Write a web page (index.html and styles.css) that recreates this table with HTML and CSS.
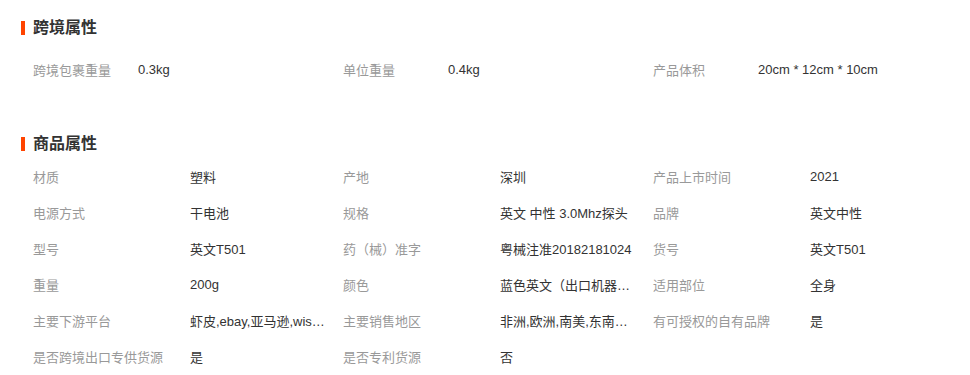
FILE: index.html
```html
<!DOCTYPE html>
<html lang="zh-CN">
<head>
<meta charset="utf-8">
<title>属性</title>
<link rel="stylesheet" href="styles.css">
</head>
<body>
<div class="page">
  <section class="section">
    <h2 class="section-title"><span class="title-bar"></span>跨境属性</h2>
    <div class="attrs attrs-cross">
      <div class="attr"><span class="attr-label">跨境包裹重量</span><span class="attr-value">0.3kg</span></div>
      <div class="attr"><span class="attr-label">单位重量</span><span class="attr-value">0.4kg</span></div>
      <div class="attr"><span class="attr-label">产品体积</span><span class="attr-value">20cm * 12cm * 10cm</span></div>
    </div>
  </section>
  <section class="section section-goods">
    <h2 class="section-title"><span class="title-bar"></span>商品属性</h2>
    <div class="attrs attrs-goods">
      <div class="attr"><span class="attr-label">材质</span><span class="attr-value">塑料</span></div>
      <div class="attr"><span class="attr-label">产地</span><span class="attr-value">深圳</span></div>
      <div class="attr"><span class="attr-label">产品上市时间</span><span class="attr-value">2021</span></div>
      <div class="attr"><span class="attr-label">电源方式</span><span class="attr-value">干电池</span></div>
      <div class="attr"><span class="attr-label">规格</span><span class="attr-value">英文 中性 3.0Mhz探头</span></div>
      <div class="attr"><span class="attr-label">品牌</span><span class="attr-value">英文中性</span></div>
      <div class="attr"><span class="attr-label">型号</span><span class="attr-value">英文T501</span></div>
      <div class="attr"><span class="attr-label">药（械）准字</span><span class="attr-value">粤械注准20182181024</span></div>
      <div class="attr"><span class="attr-label">货号</span><span class="attr-value">英文T501</span></div>
      <div class="attr"><span class="attr-label">重量</span><span class="attr-value">200g</span></div>
      <div class="attr"><span class="attr-label">颜色</span><span class="attr-value">蓝色英文（出口机器款）</span></div>
      <div class="attr"><span class="attr-label">适用部位</span><span class="attr-value">全身</span></div>
      <div class="attr"><span class="attr-label">主要下游平台</span><span class="attr-value">虾皮,ebay,亚马逊,wish,速卖通</span></div>
      <div class="attr"><span class="attr-label">主要销售地区</span><span class="attr-value">非洲,欧洲,南美,东南亚,北美</span></div>
      <div class="attr"><span class="attr-label">有可授权的自有品牌</span><span class="attr-value">是</span></div>
      <div class="attr"><span class="attr-label">是否跨境出口专供货源</span><span class="attr-value">是</span></div>
      <div class="attr"><span class="attr-label">是否专利货源</span><span class="attr-value">否</span></div>
    </div>
  </section>
</div>
</body>
</html>
```

FILE: styles.css
```css
* { box-sizing: border-box; }
html, body {
  margin: 0;
  padding: 0;
  background: #fff;
}
body {
  font-family: "Liberation Sans", "Noto Sans CJK SC", sans-serif;
  font-size: 13px;
  color: #333;
}
.page {
  padding: 18px 0 0 21px;
}
.section-title {
  display: flex;
  align-items: center;
  gap: 8px;
  height: 20px;
  margin: 0;
  font-size: 16px;
  font-weight: bold;
  color: #333;
  line-height: 20px;
}
.title-bar {
  width: 4px;
  height: 14px;
  background: #ff4400;
}
.section-goods {
  margin-top: 47px;
}
.attrs {
  display: grid;
  grid-template-columns: repeat(3, 310px);
  padding-left: 12px;
}
.attrs-cross { margin-top: 13px; }
.attrs-goods { margin-top: 4px; }
.attr {
  display: flex;
  align-items: center;
  height: 36px;
  white-space: nowrap;
}
.attr-label {
  flex: none;
  color: #999;
}
.attrs-cross .attr-label { width: 105px; }
.attrs-goods .attr-label { width: 157px; }
.attr-value {
  max-width: 135px;
  overflow: hidden;
  text-overflow: ellipsis;
  color: #333;
}
.attrs-cross .attr-value { max-width: 200px; }
```
